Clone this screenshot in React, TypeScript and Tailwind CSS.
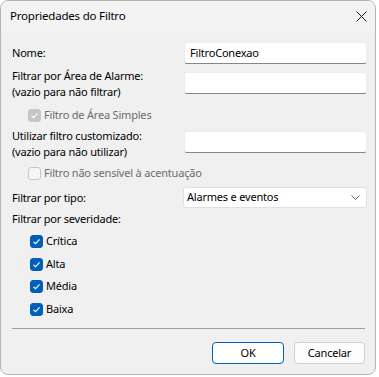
import type { ReactNode } from "react";

function Check({ checked, disabled }: { checked: boolean; disabled?: boolean }) {
  const box = checked
    ? disabled
      ? "bg-[#c6c6c6] border-[#c6c6c6]"
      : "bg-[#005fb8] border-[#005fb8]"
    : "bg-[#f5f5f5] border-[#c6c6c6]";
  return (
    <span
      className={`flex h-[13px] w-[13px] shrink-0 items-center justify-center rounded-[3px] border ${box}`}
    >
      {checked && (
        <svg width="9" height="9" viewBox="0 0 9 9" fill="none">
          <path d="M1.5 4.8 L3.5 6.7 L7.6 2.3" stroke="white" strokeWidth="1.1" />
        </svg>
      )}
    </span>
  );
}

function TextBox({ value }: { value?: string }) {
  return (
    <div className="flex h-[22px] w-[183px] items-center rounded-[3px] border border-[#ececec] border-b-[#868686] bg-white px-[5px] text-black">
      {value}
    </div>
  );
}

function Row({ label, children, className = "" }: { label: ReactNode; children: ReactNode; className?: string }) {
  return (
    <div className={`flex ${className}`}>
      <div className="w-[172px] shrink-0 leading-[16px]">{label}</div>
      {children}
    </div>
  );
}

function Option({ label, checked, disabled, className = "" }: { label: string; checked: boolean; disabled?: boolean; className?: string }) {
  return (
    <div className={`flex h-[16px] items-center gap-[3px] ${className}`}>
      <Check checked={checked} disabled={disabled} />
      <span className={disabled ? "text-[#6d6d6d]" : "text-black"}>{label}</span>
    </div>
  );
}

export default function App() {
  return (
    <div
      className="h-[377px] w-[379px] bg-white text-[11px] tracking-[-0.2px] text-black"
      style={{ fontFamily: '"Noto Sans", "Open Sans", sans-serif' }}
    >
      <div className="flex h-[375px] w-[376px] flex-col overflow-hidden rounded-[8px] border border-[#b4b4b4] bg-[#f0f0f0]">
        <div className="flex h-[30px] shrink-0 items-center justify-between bg-[#f3f3f3] pl-[9px] pr-[7px]">
          <span className="text-[11.5px]">Propriedades do Filtro</span>
          <svg width="11" height="11" viewBox="0 0 11 11" className="mr-[1px]">
            <path d="M0.5 0.5 L10.5 10.5 M10.5 0.5 L0.5 10.5" stroke="#1a1a1a" strokeWidth="1" />
          </svg>
        </div>

        <div className="flex flex-col pl-[11px] pr-[8px] pt-[11px]">
          <Row label="Nome:" className="h-[22px] items-center">
            <TextBox value="FiltroConexao" />
          </Row>

          <Row
            className="mt-[4px] h-[32px]"
            label={
              <>
                Filtrar por Área de Alarme:
                <br />
                (vazio para não filtrar)
              </>
            }
          >
            <div className="mt-[4px]">
              <TextBox />
            </div>
          </Row>

          <Option className="ml-[16px] mt-[7px]" label="Filtro de Área Simples" checked disabled />

          <Row
            className="mt-[5px] h-[32px]"
            label={
              <>
                Utilizar filtro customizado:
                <br />
                (vazio para não utilizar)
              </>
            }
          >
            <div className="mt-[3px]">
              <TextBox />
            </div>
          </Row>

          <Option className="ml-[16px] mt-[5px]" label="Filtro não sensível à acentuação" checked={false} disabled />

          <Row label="Filtrar por tipo:" className="mt-[6px] h-[21px] items-center">
            <div className="ml-[-1px] flex h-[21px] w-[184px] items-center justify-between rounded-[3px] border border-[#e0e0e0] bg-white pl-[3px] pr-[6px]">
              <span>Alarmes e eventos</span>
              <svg width="9" height="5" viewBox="0 0 9 5">
                <path d="M0.5 0.5 L4.5 4.5 L8.5 0.5" stroke="#5f5f5f" fill="none" strokeWidth="1" />
              </svg>
            </div>
          </Row>

          <div className="mt-[3px] h-[16px] leading-[16px]">Filtrar por severidade:</div>

          <Option className="ml-[18px] mt-[6px]" label="Crítica" checked />
          <Option className="ml-[18px] mt-[7px]" label="Alta" checked />
          <Option className="ml-[18px] mt-[6px]" label="Média" checked />
          <Option className="ml-[18px] mt-[7px]" label="Baixa" checked />

          <div className="mr-[2px] mt-[11px] h-px bg-[#a0a0a0]" />

          <div className="mr-[2px] mt-[13px] flex justify-end gap-[10px]">
            <button className="h-[22px] w-[72px] rounded-[4px] border border-[#005fb8] bg-white">OK</button>
            <button className="h-[22px] w-[71px] rounded-[4px] border border-[#d0d0d0] bg-[#fdfdfd]">Cancelar</button>
          </div>
        </div>
      </div>
    </div>
  );
}
